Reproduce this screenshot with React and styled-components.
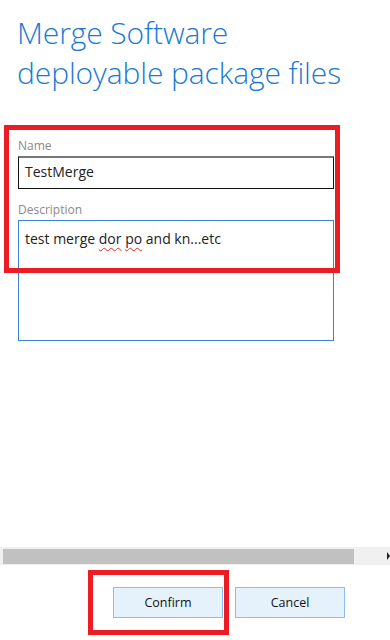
import React from "react";
import styled, { createGlobalStyle } from "styled-components";

const Global = createGlobalStyle`
  html, body { margin: 0; padding: 0; background: #fff; }
  body { font-family: "Open Sans", "Noto Sans", sans-serif; }
  * { box-sizing: border-box; }
`;

const Page = styled.div`
  position: relative;
  width: 390px;
  height: 640px;
  display: flex;
  flex-direction: column;
  overflow: hidden;
`;

const Title = styled.h1`
  margin: 13px 0 0 17px;
  font-family: "Open Sans", sans-serif;
  font-weight: 300;
  font-size: 30px;
  line-height: 40px;
  color: #1a7ad4;
  letter-spacing: -0.1px;
`;

const Form = styled.div`
  display: flex;
  flex-direction: column;
  padding: 0 56px 0 18px;
  margin-top: 45px;
`;

const Label = styled.label`
  font-size: 12px;
  line-height: 16px;
  color: #8a8a8a;
  margin-bottom: 2px;
`;

const Field = styled.div`
  height: ${(p) => p.$h}px;
  border: 1px solid ${(p) => p.$color};
  border-top-color: ${(p) => p.$top || p.$color};
  border-top-width: ${(p) => (p.$top ? 2 : 1)}px;
  padding: ${(p) => p.$pad};
  font-size: 14px;
  color: #222;
  margin-bottom: ${(p) => p.$mb || 0}px;
`;

const Typo = styled.span`
  text-decoration: underline wavy #e0262a;
  text-decoration-thickness: 1px;
  text-underline-offset: 3px;
`;

const Spacer = styled.div`
  flex: 1;
`;

const ScrollTrack = styled.div`
  height: 18px;
  background: #f0f0f0;
  display: flex;
  align-items: center;
  padding: 0 0 0 3px;
  margin-bottom: 22px;
`;

const Thumb = styled.div`
  width: 351px;
  height: 15px;
  background: #c1c1c1;
`;

const Arrow = styled.div`
  margin-left: auto;
  width: 0;
  height: 0;
  border-top: 4px solid transparent;
  border-bottom: 4px solid transparent;
  border-left: 3px solid #222;
`;

const Buttons = styled.div`
  display: flex;
  gap: 12px;
  padding-left: 113px;
  margin-bottom: 22px;
`;

const Button = styled.button`
  width: 110px;
  height: 31px;
  background: #e5f1fb;
  border: 1px solid #8cbcea;
  font-family: "Open Sans", sans-serif;
  font-size: 12.5px;
  color: #111;
  padding: 0;
`;

const Highlight = styled.div`
  position: absolute;
  left: ${(p) => p.$x}px;
  top: ${(p) => p.$y}px;
  width: ${(p) => p.$w}px;
  height: ${(p) => p.$h}px;
  border: 5px solid #ec1c24;
  pointer-events: none;
`;

export default function App() {
  return (
    <Page>
      <Global />
      <Title>
        Merge Software
        <br />
        deployable package files
      </Title>
      <Form>
        <Label>Name</Label>
        <Field $h={33} $color="#111" $top="#777" $pad="4px 6px" $mb={13}>
          TestMerge
        </Field>
        <Label>Description</Label>
        <Field $h={121} $color="#3a80dd" $pad="8px 6px">
          test merge <Typo>dor</Typo> <Typo>po</Typo> and kn...etc
        </Field>
      </Form>
      <Spacer />
      <ScrollTrack>
        <Thumb />
        <Arrow />
      </ScrollTrack>
      <Buttons>
        <Button>Confirm</Button>
        <Button>Cancel</Button>
      </Buttons>
      <Highlight $x={4} $y={125} $w={336} $h={148} />
      <Highlight $x={88} $y={570} $w={141} $h={65} />
    </Page>
  );
}
